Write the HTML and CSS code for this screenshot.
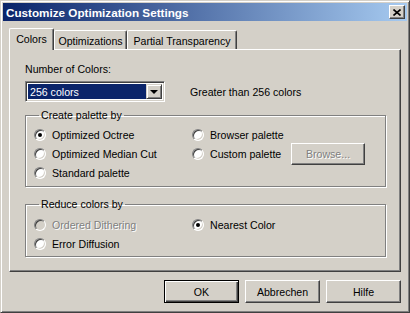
FILE: index.html
```html
<!DOCTYPE html>
<html>
<head>
    <title>Customize Optimization Settings</title>
    <link rel="stylesheet" href="styles.css">
</head>
<body>
    <div class="window">
        <!-- Title bar -->
        <div class="titlebar">
            <span class="title">Customize Optimization Settings</span>
            <button class="close-btn">
                <svg width="8" height="7" viewBox="0 0 8 7">
                    <path d="M0.5 0.5 L7.5 6.5 M7.5 0.5 L0.5 6.5" stroke="#000" stroke-width="1.6" fill="none"/>
                </svg>
            </button>
        </div>

        <div class="main">
            <!-- Tabs -->
            <div class="tabs">
                <div class="tab tab-active tab-colors">Colors</div>
                <div class="tab tab-opt">Optimizations</div>
                <div class="tab tab-partial">Partial Transparency</div>
            </div>

            <div class="panel">
                <div class="label">Number of Colors:</div>
                <div class="combo-row">
                    <div class="combo">
                        <div class="combo-value"><span>256 colors</span></div>
                        <div class="combo-arrow"><span class="arrow"></span></div>
                    </div>
                    <div class="combo-note">Greater than 256 colors</div>
                </div>

                <fieldset class="group group-palette">
                    <legend>Create palette by</legend>
                    <div class="radio-grid">
                        <div class="radio"><span class="dot checked"></span>Optimized Octree</div>
                        <div class="radio"><span class="dot"></span>Browser palette</div>
                        <div></div>
                        <div class="radio"><span class="dot"></span>Optimized Median Cut</div>
                        <div class="radio"><span class="dot"></span>Custom palette</div>
                        <div class="browse-cell"><button class="btn btn-disabled">Browse...</button></div>
                        <div class="radio"><span class="dot"></span>Standard palette</div>
                    </div>
                </fieldset>

                <fieldset class="group group-reduce">
                    <legend>Reduce colors by</legend>
                    <div class="radio-grid">
                        <div class="radio disabled"><span class="dot"></span>Ordered Dithering</div>
                        <div class="radio"><span class="dot checked"></span>Nearest Color</div>
                        <div></div>
                        <div class="radio"><span class="dot"></span>Error Diffusion</div>
                    </div>
                </fieldset>
            </div>

            <!-- Buttons -->
            <div class="buttons">
                <button class="btn btn-default">OK</button>
                <button class="btn">Abbrechen</button>
                <button class="btn">Hilfe</button>
            </div>
        </div>
    </div>
</body>
</html>
```

FILE: styles.css
```css
body {
    margin: 0;
    padding: 0;
    font-family: "Liberation Sans", Arial, sans-serif;
    font-size: 10.6px;
    color: #000;
    background: #d4d0c8;
}

/* Window frame */
.window {
    width: 410px;
    height: 313px;
    box-sizing: border-box;
    background: #d4d0c8;
    border: 1px solid;
    border-color: #d4d0c8 #404040 #404040 #d4d0c8;
    box-shadow: inset 1px 1px #fff, inset -1px -1px #808080;
    padding: 2px;
}

.titlebar {
    height: 18px;
    display: flex;
    align-items: center;
    justify-content: space-between;
    padding: 0 2px 0 3px;
    background: linear-gradient(to right, #0a246a, #a6caf0);
}

.title {
    color: #fff;
    font-weight: bold;
    font-size: 11.7px;
}

.close-btn {
    width: 16px;
    height: 14px;
    padding: 0;
    display: flex;
    align-items: center;
    justify-content: center;
    background: #d4d0c8;
    border: 1px solid;
    border-color: #fff #404040 #404040 #fff;
    box-shadow: inset -1px -1px #808080;
}

.main {
    padding: 7px 6px 0 6px;
}

/* Tabs */
.tabs {
    display: flex;
    align-items: flex-end;
    height: 21px;
    position: relative;
    z-index: 1;
}

.tab {
    height: 19px;
    box-sizing: border-box;
    display: flex;
    align-items: center;
    justify-content: center;
    border-top: 1px solid #fff;
    border-left: 1px solid #fff;
    border-right: 1px solid #404040;
    box-shadow: inset -1px 0 #808080;
    border-radius: 2px 2px 0 0;
    padding-top: 1px;
}

.tab-active {
    height: 22px;
    margin-bottom: -1px;
    background: #d4d0c8;
    padding-bottom: 3px;
}

.tab-colors { width: 45px; }
.tab-opt { width: 73px; }
.tab-partial { width: 110px; }

.panel {
    height: 223px;
    box-sizing: border-box;
    border: 1px solid;
    border-color: #fff #404040 #404040 #fff;
    box-shadow: inset -1px -1px #808080;
    padding: 13px 0 0 15px;
}

.label {
    line-height: 13px;
}

.combo-row {
    display: flex;
    align-items: center;
    margin-top: 5px;
}

.combo {
    width: 140px;
    height: 21px;
    box-sizing: border-box;
    display: flex;
    border: 1px solid;
    border-color: #808080 #fff #fff #808080;
    box-shadow: inset 1px 1px #404040, inset -1px -1px #d4d0c8;
    padding: 2px;
    background: #fff;
}

.combo-value {
    flex: 1;
    background: #0a246a;
    color: #fff;
    display: flex;
    align-items: center;
    padding-left: 2px;
}

.combo-arrow {
    width: 16px;
    box-sizing: border-box;
    background: #d4d0c8;
    border: 1px solid;
    border-color: #d4d0c8 #404040 #404040 #d4d0c8;
    box-shadow: inset 1px 1px #fff, inset -1px -1px #808080;
    display: flex;
    align-items: center;
    justify-content: center;
}

.arrow {
    width: 0;
    height: 0;
    border-left: 4px solid transparent;
    border-right: 4px solid transparent;
    border-top: 4px solid #000;
}

.combo-note {
    margin-left: 25px;
}

/* Group boxes */
.group {
    width: 361px;
    box-sizing: border-box;
    margin: 7px 0 0 0;
    padding: 3px 0 4px 8px;
    border: 1px solid #808080;
    box-shadow: inset 1px 1px #fff, 1px 1px #fff;
}

.group legend {
    margin-left: 5px;
    padding: 0 2px;
    line-height: 13px;
}

.group-reduce {
    margin-top: 11px;
    padding: 4px 0 3px 8px;
}

.radio-grid {
    display: grid;
    grid-template-columns: 158px 99px 74px;
    grid-auto-rows: 19px;
}

.radio {
    display: flex;
    align-items: center;
    white-space: nowrap;
}

.dot {
    width: 12px;
    height: 12px;
    box-sizing: border-box;
    border-radius: 50%;
    background: #fff;
    border: 1px solid;
    border-color: #808080 #fff #fff #808080;
    box-shadow: inset 1px 1px #404040, inset -1px -1px #d4d0c8;
    margin-right: 6px;
    display: flex;
    align-items: center;
    justify-content: center;
}

.dot.checked::after {
    content: "";
    width: 4px;
    height: 4px;
    border-radius: 50%;
    background: #000;
}

.disabled {
    color: #808080;
    text-shadow: 1px 1px #fff;
}

.disabled .dot {
    background: #d4d0c8;
}

.browse-cell {
    display: flex;
    align-items: center;
}

/* Buttons */
.btn {
    font-family: "Liberation Sans", Arial, sans-serif;
    font-size: 10.6px;
    width: 75px;
    height: 23px;
    padding: 0;
    background: #d4d0c8;
    color: #000;
    border: 1px solid;
    border-color: #fff #404040 #404040 #fff;
    box-shadow: inset -1px -1px #808080;
}

.btn-disabled {
    width: 74px;
    height: 22px;
    color: #808080;
    text-shadow: 1px 1px #fff;
}

.btn-default {
    border: 1px solid #000;
    box-shadow: inset 1px 1px #fff, inset -1px -1px #404040, inset -2px -2px #808080;
}

.buttons {
    display: flex;
    justify-content: flex-end;
    gap: 6px;
    margin-top: 8px;
}
```
